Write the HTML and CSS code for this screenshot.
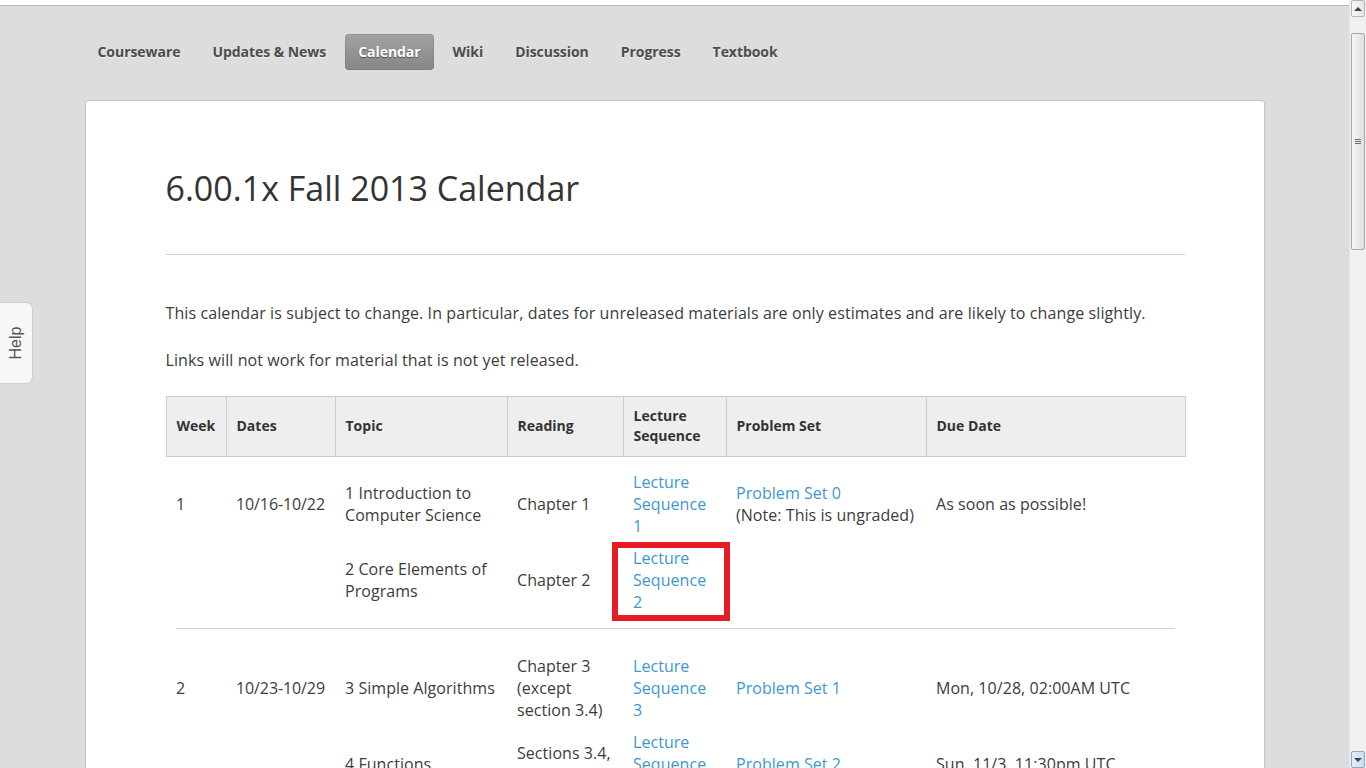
FILE: index.html
```html
<!DOCTYPE html>
<html lang="en">
<head>
<meta charset="utf-8">
<title>6.00.1x Fall 2013 Calendar</title>
<link rel="stylesheet" href="styles.css">
</head>
<body>
<div class="topstrip"></div>
<div class="page">
  <div class="container">
    <nav class="tabs">
      <a class="tab">Courseware</a>
      <a class="tab">Updates &amp; News</a>
      <a class="tab active">Calendar</a>
      <a class="tab">Wiki</a>
      <a class="tab">Discussion</a>
      <a class="tab">Progress</a>
      <a class="tab">Textbook</a>
    </nav>
    <section class="card">
      <h1 class="title">6.00.1x Fall 2013 Calendar</h1>
      <hr class="rule">
      <p class="note">This calendar is subject to change. In particular, dates for unreleased materials are only estimates and are likely to change slightly.</p>
      <p class="note">Links will not work for material that is not yet released.</p>
      <table class="cal">
        <colgroup>
          <col class="c-week"><col class="c-dates"><col class="c-topic"><col class="c-read"><col class="c-lec"><col class="c-ps"><col class="c-due">
        </colgroup>
        <thead>
          <tr>
            <th>Week</th><th>Dates</th><th>Topic</th><th>Reading</th><th>Lecture Sequence</th><th>Problem Set</th><th>Due Date</th>
          </tr>
        </thead>
        <tbody>
          <tr class="first">
            <td>1</td><td class="nowrap">10/16-10/22</td><td>1 Introduction to Computer Science</td><td>Chapter 1</td>
            <td><a class="link">Lecture Sequence 1</a></td>
            <td><a class="link">Problem Set 0</a><br>(Note: This is ungraded)</td>
            <td>As soon as possible!</td>
          </tr>
          <tr>
            <td></td><td></td><td>2 Core Elements of Programs</td><td>Chapter 2</td>
            <td class="marked"><a class="link">Lecture Sequence 2</a><span class="redbox"></span></td>
            <td></td><td></td>
          </tr>
          <tr class="sep"><td colspan="7"><div class="sepline"></div></td></tr>
          <tr>
            <td>2</td><td class="nowrap">10/23-10/29</td><td>3 Simple Algorithms</td><td>Chapter 3 (except section 3.4)</td>
            <td><a class="link">Lecture Sequence 3</a></td>
            <td><a class="link">Problem Set 1</a></td>
            <td>Mon, 10/28, 02:00AM UTC</td>
          </tr>
          <tr>
            <td></td><td></td><td>4 Functions</td><td>Sections 3.4, 4.1-4.2</td>
            <td><a class="link">Lecture Sequence 4</a></td>
            <td><a class="link">Problem Set 2</a></td>
            <td>Sun, 11/3, 11:30pm UTC</td>
          </tr>
        </tbody>
      </table>
    </section>
  </div>
</div>
<div class="help"><span class="help-text">Help</span></div>
<div class="scrollbar">
  <div class="sb-btn sb-up"><span class="arrow-up"></span></div>
  <div class="sb-track">
    <div class="sb-thumb"><span class="grip"></span><span class="grip"></span><span class="grip"></span></div>
  </div>
  <div class="sb-btn sb-down"><span class="arrow-down"></span></div>
</div>
</body>
</html>
```
FILE: styles.css
```css
html, body {
  margin: 0;
  padding: 0;
  height: 100%;
  overflow: hidden;
}
body {
  background: #dddddd;
  font-family: "Open Sans", "Liberation Sans", sans-serif;
  color: #3c3c3c;
}
.topstrip {
  height: 5px;
  background: #ffffff;
  border-bottom: 1px solid #b9b9b9;
  margin-right: 17px;
}
.page {
  margin-right: 17px;
}
.container {
  width: 1180px;
  margin: 0 auto;
}
.tabs {
  display: flex;
  gap: 6px;
  padding-top: 28px;
  height: 36px;
}
.tab {
  display: block;
  padding: 0 13px;
  height: 36px;
  line-height: 35px;
  font-size: 14px;
  font-weight: 700;
  letter-spacing: -0.05px;
  color: #4c4c4c;
  text-shadow: 0 1px 0 rgba(255,255,255,0.6);
  border-radius: 4px;
}
.tab.active {
  background: linear-gradient(#a2a2a2, #868686);
  color: #ffffff;
  text-shadow: 0 1px 1px rgba(0,0,0,0.45);
  box-shadow: inset 0 0 0 1px rgba(0,0,0,0.08);
}
.card {
  margin-top: 30px;
  background: #ffffff;
  border: 1px solid #c6c6c6;
  border-radius: 3px;
  padding: 67px 79px 40px 80px;
  min-height: 700px;
}
.title {
  margin: 0 0 46px;
  font-size: 34px;
  line-height: 40px;
  font-weight: 400;
  color: #333333;
}
.rule {
  margin: 0 0 47px;
  border: 0;
  border-top: 1px solid #cfcfcf;
  height: 0;
}
.note {
  margin: 0 0 25px;
  font-size: 16px;
  line-height: 22px;
  letter-spacing: 0.1px;
  color: #3c3c3c;
}
.cal {
  width: 1019px;
  border-collapse: collapse;
  table-layout: fixed;
  font-size: 16px;
  line-height: 22px;
  letter-spacing: 0.05px;
}
.c-week { width: 60px; }
.c-dates { width: 109px; }
.c-topic { width: 172px; }
.c-read { width: 116px; }
.c-lec { width: 103px; }
.c-ps { width: 200px; }
.c-due { width: 259px; }
.cal th {
  background: #eeeeee;
  border: 1px solid #cccccc;
  text-align: left;
  font-size: 14px;
  line-height: 20px;
  font-weight: 700;
  letter-spacing: 0;
  color: #333333;
  padding: 9px 10px 10px;
  height: 40px;
  vertical-align: middle;
}
.cal td {
  padding: 5px 10px;
  vertical-align: middle;
  text-align: left;
}
.cal td.nowrap {
  white-space: nowrap;
  letter-spacing: -0.1px;
}
.cal tr.first td {
  padding-top: 14px;
}
.cal tr.sep td {
  padding: 10px 10px 21px;
}
.sepline {
  border-top: 1px solid #d2d2d2;
}
.link {
  color: #3d97d3;
  text-decoration: none;
}
.marked {
  position: relative;
}
.redbox {
  position: absolute;
  left: -11px;
  top: 0;
  width: 106px;
  height: 67px;
  border: 6px solid #e51c24;
}
.help {
  position: fixed;
  left: 0;
  top: 302px;
  width: 32px;
  height: 80px;
  background: #f8f8f8;
  border: 1px solid #cfcfcf;
  border-left: 0;
  border-radius: 0 7px 7px 0;
  display: flex;
  align-items: center;
  justify-content: center;
}
.help-text {
  display: block;
  transform: rotate(-90deg);
  font-family: "Liberation Sans", Arial, sans-serif;
  font-size: 16px;
  line-height: 16px;
  color: #555555;
  white-space: nowrap;
}
.scrollbar {
  position: fixed;
  right: 0;
  top: 0;
  width: 17px;
  height: 768px;
  background: #f0f0f0;
  border-left: 1px solid #e6e6e6;
  box-sizing: border-box;
  display: flex;
  flex-direction: column;
}
.sb-btn {
  height: 17px;
  margin: 0 1px;
  box-sizing: border-box;
  border: 1px solid #b8b8b8;
  border-radius: 2px;
  background: linear-gradient(90deg, #f8f8f8, #e4e4e4);
  display: flex;
  align-items: center;
  justify-content: center;
}
.sb-down {
  background: linear-gradient(90deg, #e4effa, #c7dcf2);
  border-color: #8aa8c8;
}
.arrow-up {
  width: 0; height: 0;
  border-left: 4px solid transparent;
  border-right: 4px solid transparent;
  border-bottom: 4px solid #444444;
}
.arrow-down {
  width: 0; height: 0;
  border-left: 4px solid transparent;
  border-right: 4px solid transparent;
  border-top: 4px solid #444444;
}
.sb-track {
  flex: 1;
  padding-top: 16px;
}
.sb-thumb {
  margin: 0 1px;
  height: 217px;
  box-sizing: border-box;
  border: 1px solid #a9a9a9;
  border-radius: 2px;
  background: linear-gradient(90deg, #f6f6f6, #dedede);
  display: flex;
  flex-direction: column;
  align-items: center;
  justify-content: center;
  gap: 1px;
}
.grip {
  display: block;
  width: 6px;
  height: 1px;
  background: #6e6e6e;
}
```
